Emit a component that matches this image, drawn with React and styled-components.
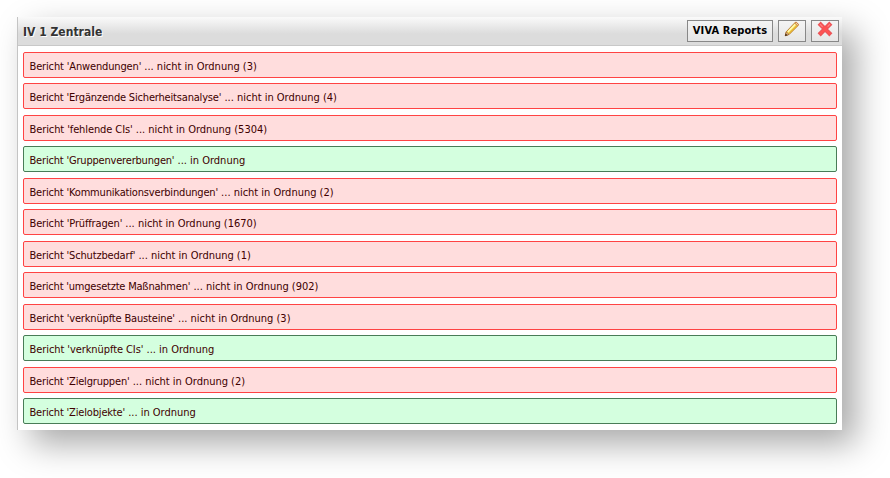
import React from 'react';
import styled, { createGlobalStyle } from 'styled-components';

const GlobalStyle = createGlobalStyle`
  * { box-sizing: border-box; }
  body {
    margin: 0;
    height: 478px;
    overflow: hidden;
    background: #fff;
    font-family: "DejaVu Sans Condensed", "DejaVu Sans", sans-serif;
    font-stretch: condensed;
    font-size: 11px;
  }
`;

const Panel = styled.section`
  width: 825px;
  height: 413px;
  margin: 17px 0 0 17px;
  border-left: 1px solid #c4c4c4;
  background: #fff;
  box-shadow: 14px 14px 32px rgba(0, 0, 0, 0.34);
`;

const Header = styled.header`
  display: flex;
  align-items: center;
  justify-content: space-between;
  height: 29px;
  padding: 0 3px 0 5px;
  border-bottom: 1px solid #c8c8c8;
  background: linear-gradient(#fafafa, #dcdcdc 60%, #dcdcdc);
`;

const Title = styled.h1`
  margin: 0;
  padding-top: 2px;
  font-size: 12px;
  font-weight: bold;
  letter-spacing: 0.02px;
  color: #333;
  text-shadow: 1px 1px 0 #fff;
`;

const Actions = styled.div`
  display: flex;
  gap: 5px;
`;

const Button = styled.button`
  display: flex;
  align-items: center;
  justify-content: center;
  width: ${(p) => (p.$wide ? 86 : 28)}px;
  height: 22px;
  padding: 0 0 ${(p) => (p.$wide ? 2 : 4)}px;
  border: 1px solid #888;
  background: linear-gradient(#f4f4f4, #e6e6e6);
  color: #000;
  font: inherit;
  font-weight: bold;
  letter-spacing: 0.1px;
  white-space: nowrap;
`;

const List = styled.div`
  display: flex;
  flex-direction: column;
  gap: 5.46px;
  padding: 6px 5px 0;
`;

const Row = styled.div`
  flex: none;
  height: 26px;
  padding: 1px 0 0 5.5px;
  border: 1px solid ${(p) => (p.$ok ? '#487c57' : '#ff4343')};
  border-radius: 2px;
  background: ${(p) => (p.$ok ? '#d4ffdf' : '#ffdddd')};
  color: #400000;
  line-height: 26px;
  white-space: pre;
`;

const ReportName = styled.span`
  letter-spacing: ${(p) => p.$tracking}px;
`;

const Status = styled.span`
  letter-spacing: -0.01px;
`;

const reports = [
  ['Anwendungen', '3', -0.15],
  ['Ergänzende Sicherheitsanalyse', '4', -0.18],
  ['fehlende CIs', '5304', -0.1],
  ['Gruppenvererbungen', null, -0.19],
  ['Kommunikationsverbindungen', '2', -0.18],
  ['Prüffragen', '1670', -0.15],
  ['Schutzbedarf', '1', -0.17],
  ['umgesetzte Maßnahmen', '902', -0.21],
  ['verknüpfte Bausteine', '3', -0.16],
  ['verknüpfte CIs', null, -0.08],
  ['Zielgruppen', '2', -0.18],
  ['Zielobjekte', null, -0.17],
];

const PencilIcon = () => (
  <svg width="16" height="16" viewBox="0 0 16 16">
    <path d="M1.3 14.7l1-4L10.4 2.2l1.6-1.2 2.6 2.4-1.1 1.7-8.2 8.2z" fill="#f8df5c" stroke="#b97d33" />
    <path d="M4 10.7l7.3-7.4" stroke="#fff9b4" strokeWidth="1.5" />
    <path d="M5.4 12.1l7.5-7.5" stroke="#e3ae2c" strokeWidth="1.2" />
    <path d="M10.8 2.1l1.3-1 2.4 2.3-.9 1.4z" fill="#f6d0a8" stroke="#c98445" />
    <path d="M1.3 14.7l1-3.8 2.8 2.5z" fill="#e9c291" stroke="#a0662f" strokeWidth=".8" />
    <path d="M1 15l.6-2.6 2 1.8z" fill="#3d2b1c" />
  </svg>
);

const CrossIcon = () => (
  <svg width="16" height="16" viewBox="0 0 16 16">
    <path d="M3.7 3.7l8.6 8.6M12.3 3.7l-8.6 8.6" stroke="#ea5458" strokeWidth="4.4" strokeLinecap="square" strokeLinejoin="round" />
    <path d="M3.5 3.5l9 9M12.5 3.5l-9 9" stroke="#ff5252" strokeWidth="2.4" strokeLinecap="round" />
    <path d="M3 3.2l2.6 2.6M13 3.2l-2.4 2.4" stroke="#ff8585" strokeWidth="1.2" />
  </svg>
);

export default function App() {
  return (
    <>
      <GlobalStyle />
      <Panel>
        <Header>
          <Title>IV 1 Zentrale</Title>
          <Actions>
            <Button $wide>VIVA Reports</Button>
            <Button aria-label="Bearbeiten"><PencilIcon /></Button>
            <Button aria-label="Entfernen"><CrossIcon /></Button>
          </Actions>
        </Header>
        <List>
          {reports.map(([name, count, tracking]) => (
            <Row key={name} $ok={count === null}>
              <ReportName $tracking={tracking}>{`Bericht '${name}'`}</ReportName>
              <Status>{` ... ${count === null ? 'in Ordnung' : `nicht in Ordnung (${count})`}`}</Status>
            </Row>
          ))}
        </List>
      </Panel>
    </>
  );
}
